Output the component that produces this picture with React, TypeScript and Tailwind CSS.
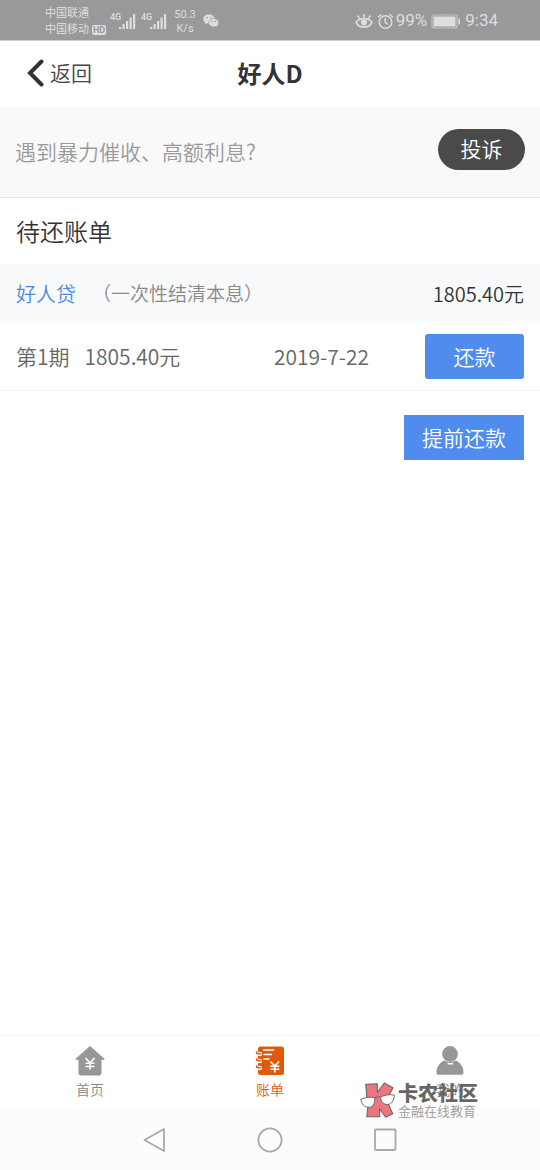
import type { ReactNode } from "react";

function SignalIcon({ idle = false }: { idle?: boolean }) {
  return (
    <div className="flex items-start">
      <span className="w-[10px] text-[9px] leading-[9px] font-medium">4G</span>
      <svg className="-ml-px" width="17" height="17" viewBox="0 0 17 17" fill="currentColor" aria-hidden="true">
        <rect x="0" y="14" width="2.2" height="2" />
        <rect x="3.500" y="11" width="2.2" height="5" />
        <rect x="7" y="8" width="2.2" height="8" />
        <rect x="10.500" y="4.500" width="2.2" height="11.5" />
        <rect x="14" y="1" width="2.200" height="15" />
        {idle && (
          <path d="M-5.500 16v-4l-1 1M-3 12v4l1-1" fill="none" stroke="currentColor" opacity="0.4" />
        )}
      </svg>
    </div>
  );
}

function StatusBar() {
  return (
    <div className="flex h-[41px] items-center justify-between border-b border-[#cfcfcf] bg-[#999] pt-[2px] pr-[42px] pl-[45px] font-['Roboto','Noto_Sans_CJK_SC',sans-serif] font-normal text-[#dedede]">
      <div className="flex items-center">
        <div className="pt-[2px] text-[11px] leading-4">
          <div>中国联通</div>
          <div className="flex items-center gap-[3px]">
            中国移动
            <span className="h-[10px] w-[14px] rounded-[2px] bg-[#dedede] text-center text-[9px] leading-[10px] font-bold text-[#999]">
              HD
            </span>
          </div>
        </div>
        <div className="ml-1 flex gap-[5px]">
          <SignalIcon />
          <SignalIcon idle />
        </div>
        <div className="ml-1 w-7 pt-[2px] text-center text-[11px] leading-[14px]">
          50.3
          <br />
          K/s
        </div>
        <svg className="ml-1" width="16" height="14" viewBox="0 0 16 14" aria-hidden="true">
          <path d="M6 .5C2.800.5.2 2.500.2 5.100c0 1.500.8 2.700 2 3.500L1.700 10.300l2-1c.7.2 1.500.3 2.300.3C9.200 9.600 11.800 7.600 11.800 5S9.200.5 6 .5z" fill="currentColor" />
          <path d="M10.800 4.600c-2.800 0-5 1.800-5 4.100s2.200 4.100 5 4.100c.6 0 1.200-.1 1.700-.2l1.800.9-.5-1.500c1.200-.8 1.900-1.900 1.900-3.300 0-2.300-2.200-4.100-4.900-4.100z" fill="currentColor" stroke="#999" strokeWidth=".6" />
          <g fill="#999">
            <circle cx="4" cy="3.700" r=".8" />
            <circle cx="8" cy="3.700" r=".8" />
            <circle cx="9.200" cy="7.500" r=".7" />
            <circle cx="12.400" cy="7.500" r=".7" />
          </g>
        </svg>
      </div>
      <div className="flex items-center text-[17px]">
        <svg width="18" height="16" viewBox="0 0 18 16" fill="none" stroke="currentColor" strokeWidth="1.600" aria-hidden="true">
          <path d="M1 9.500C4.500 4.200 13.500 4.200 17 9.500 13.500 15.600 4.500 15.600 1 9.500z" />
          <path d="M9 4.500V1M4.500 5.500 2.500 2.500M13.500 5.500l2-3" />
          <circle cx="9" cy="9.300" r="2.300" fill="currentColor" />
        </svg>
        <svg className="ml-1" width="17" height="17" viewBox="0 0 17 17" fill="none" stroke="currentColor" strokeWidth="1.500" aria-hidden="true">
          <circle cx="8.500" cy="9" r="6.300" />
          <path d="M8.300 5v4.300l2.700 2.200M1 4.300 4.500 1.200M16 4.300l-3.500-3.100" />
        </svg>
        <span className="ml-[2px]">99%</span>
        <svg className="ml-1" width="30" height="15" viewBox="0 0 30 15" aria-hidden="true">
          <rect x="1" y="1" width="25" height="13" rx="2" fill="none" stroke="#c4c4c4" strokeWidth="1.200" />
          <rect x="2.500" y="2.500" width="22" height="10" fill="currentColor" />
          <rect x="27.500" y="4.500" width="1.500" height="6" fill="currentColor" />
        </svg>
        <span className="ml-1">9:34</span>
      </div>
    </div>
  );
}

function Header() {
  return (
    <header className="grid h-[66px] grid-cols-3 items-center bg-white pb-[2px]">
      <button type="button" className="flex items-center gap-[6px] pl-[27px] text-[21px] text-[#444]">
        <svg width="17" height="28" viewBox="0 0 17 28" fill="none" stroke="#333" strokeWidth="4" strokeLinecap="round" aria-hidden="true">
          <path d="M14.500 2.500 3 14l11.500 11.500" />
        </svg>
        返回
      </button>
      <h1 className="text-center text-2xl font-bold text-[#333]">好人D</h1>
    </header>
  );
}

function TabItem({ label, active = false, children }: { label: string; active?: boolean; children: ReactNode }) {
  return (
    <a
      href="#"
      className={`flex flex-col items-center gap-px pt-[10px] text-[14px] leading-6 ${active ? "text-[#e05a0c]" : "text-[#888]"}`}
    >
      {children}
      {label}
    </a>
  );
}

function TabBar() {
  return (
    <nav className="grid h-[75px] grid-cols-3 border-t border-[#f7f7f7] bg-white">
      <TabItem label="首页">
        <svg width="30" height="30" viewBox="0 0 30 30" aria-hidden="true">
          <path d="M15 0 .5 12.800c-.4.5-.2.900.4.900H3.500V27c0 1.500.8 2.500 2.300 2.500h18.400c1.500 0 2.300-1 2.300-2.500V13.700h2.600c.6 0 .8-.4.4-.9z" fill="#979797" />
          <path d="m10.500 12 4.500 5 4.500-5M15 17v6.500M10.500 17.300h9M10.500 20.500h9" fill="none" stroke="#fff" strokeWidth="1.600" />
        </svg>
      </TabItem>
      <TabItem label="账单" active>
        <svg width="30" height="30" viewBox="0 0 30 30" fill="none" aria-hidden="true">
          <rect x="3" y=".5" width="26" height="28.500" rx="2.500" fill="#e05a0c" />
          <g fill="#fff">
            <circle cx="4.800" cy="8" r="2.300" />
            <circle cx="4.800" cy="15" r="2.300" />
            <circle cx="4.800" cy="22" r="2.300" />
          </g>
          <g stroke="#e05a0c" strokeWidth="1.500" strokeLinecap="round">
            <path d="M5.500 7.700H2.800q-1.500-.3-1.300-1.700M5.500 14.700H2.800q-1.500-.3-1.300-1.700M5.500 21.700H2.800q-1.500-.3-1.300-1.700" />
          </g>
          <path d="M8.500 4h10M9 8.500h7.500M9 13h5" stroke="#fff" strokeWidth="1.500" strokeLinecap="round" />
          <path d="m15.500 15.500 4.300 4.500 4.300-4.500M19.800 20v6.500M15.300 20.300h9M15.300 23.300h9" stroke="#fff" strokeWidth="1.600" />
        </svg>
      </TabItem>
      <TabItem label="我的">
        <svg width="30" height="30" viewBox="0 0 30 30" fill="#979797" aria-hidden="true">
          <circle cx="15" cy="8" r="7.900" />
          <path d="M9.500 14.500C4.500 16.500 1.500 21 1.500 26.500c0 1.500.8 2.300 2.300 2.300h22.400c1.500 0 2.300-.8 2.300-2.300 0-5.500-3-10-8-12-3 2.200-8 2.200-11 0z" />
          <rect x="12.500" y="17" width="5.500" height="1.500" fill="#fff" />
        </svg>
      </TabItem>
    </nav>
  );
}

function SystemNav() {
  return (
    <div className="grid h-[60px] grid-cols-3 place-items-center bg-[#fcfcfc] px-24 text-[#a8a8a8]">
      <button type="button" aria-label="Back">
        <svg width="24" height="26" viewBox="0 0 24 26" fill="none" stroke="currentColor" strokeWidth="1.800" strokeLinejoin="round">
          <path d="M22 2v22L2.500 13z" />
        </svg>
      </button>
      <button type="button" aria-label="Home">
        <svg width="26" height="26" viewBox="0 0 26 26" fill="none" stroke="currentColor" strokeWidth="1.800">
          <circle cx="13" cy="13" r="11.600" />
        </svg>
      </button>
      <button type="button" aria-label="Recents">
        <svg width="24" height="24" viewBox="0 0 24 24" fill="none" stroke="currentColor" strokeWidth="1.800">
          <rect x="1" y="1.500" width="20.500" height="20.500" rx="1" />
        </svg>
      </button>
    </div>
  );
}

function Watermark() {
  return (
    <div className="pointer-events-none absolute right-[62px] bottom-[51px] flex items-center gap-[2px]">
      <svg width="36" height="37" viewBox="0 0 36 37" strokeLinejoin="round" aria-hidden="true">
        <path d="M5.700 2.300 17.300 1.700v8.600L24.300 1 33 5.700 26.500 18l6.200 13.800-7 3.500-6.200-8.600.3 8L6.800 34.700l1-10z" fill="#ec757f" stroke="#6f6568" strokeWidth="1.100" />
        <path d="M.8 17.200c4.500-2 9.500-2.600 13.700-1.500.8 5.500-1.500 9.600-5.700 9.600-4.400 0-7.300-3.500-8-8.100z" fill="#fff" stroke="#6b6b6b" strokeWidth="1" />
        <path d="M20.500 15c4-2.100 9-2.800 13.800-2-.2 5.200-2.600 9.500-6.900 9.500-4 0-6.600-3-6.900-7.500z" fill="#fff" stroke="#6b6b6b" strokeWidth="1" />
        <path d="M14.500 16q3-2 6-1" fill="none" stroke="#6b6b6b" strokeWidth="1" />
      </svg>
      <div>
        <div className="text-xl leading-5 font-black text-[#666]">卡农社区</div>
        <div className="text-[13px] leading-4 text-[#999]">金融在线教育</div>
      </div>
    </div>
  );
}

export default function App() {
  return (
    <div className="relative flex min-h-screen flex-col bg-white font-['Noto_Sans_CJK_SC',sans-serif] font-[350]">
      <StatusBar />
      <Header />

      <main className="flex-1">
        {/* 投诉入口 */}
        <section className="flex h-[91px] items-center justify-between border-b border-[#e6e6e6] bg-[#f9f9f9] px-[15px] pb-[6px]">
          <p className="pt-[5px] text-[21px] text-[#999]">遇到暴力催收、高额利息?</p>
          <button type="button" className="h-[41px] w-[87px] rounded-full bg-[#4a4a4a] text-[21px] text-white">
            投诉
          </button>
        </section>

        <h2 className="flex h-[66px] items-center px-4 text-2xl text-[#333]">待还账单</h2>

        <div className="flex h-[59px] items-center bg-[#f8f9fb] px-4 text-[20px]">
          <span className="text-[#4a8bdf]">好人贷</span>
          <span className="ml-4 text-[19px] text-[#888]">（一次性结清本息）</span>
          <span className="ml-auto text-[#333]">1805.40元</span>
        </div>

        {/* 分期 */}
        <div className="flex h-[68px] items-center border-b border-[#f0f0f0] px-4 text-[21px] text-[#666]">
          <span>第1期</span>
          <span className="ml-[15px]">1805.40元</span>
          <span className="ml-auto">2019-7-22</span>
          <button type="button" className="ml-14 h-[45px] w-[99px] rounded-[3px] bg-[#4f8cee] text-white">
            还款
          </button>
        </div>

        <div className="flex justify-end px-4 pt-6">
          <button type="button" className="h-[45px] w-[120px] bg-[#4f8cee] text-[21px] text-white">
            提前还款
          </button>
        </div>
      </main>

      <TabBar />
      <SystemNav />
      <Watermark />
    </div>
  );
}
